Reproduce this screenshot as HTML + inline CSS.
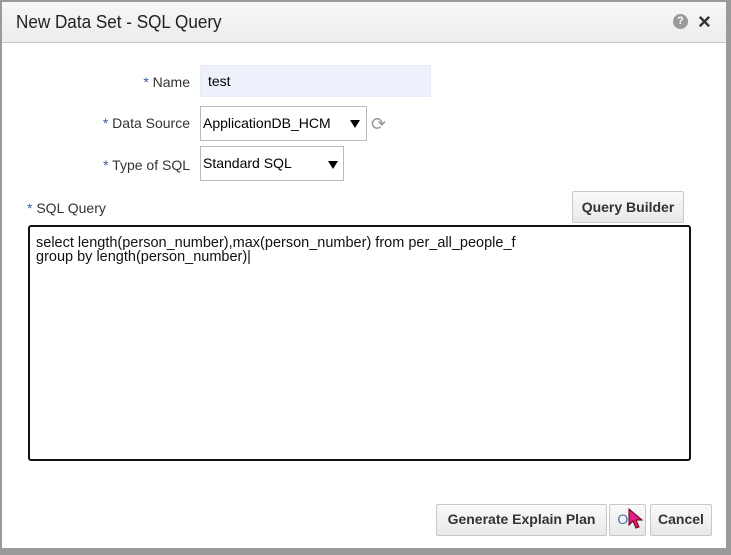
<!DOCTYPE html>
<html><head><style>
body{margin:0;width:731px;height:555px;background:#9a9a9a;position:relative;overflow:hidden;font-family:"Liberation Sans",Arial,sans-serif;}
.dlg{position:absolute;left:1px;top:1px;width:724px;height:546px;background:#fff;border:1px solid #9a9a9a;}
.title{position:absolute;left:0;top:0;right:0;height:40px;background:linear-gradient(#f7f7f7,#ececec);border-bottom:1px solid #c8c8c8;}
.title span{position:absolute;left:14px;top:10px;font-size:18px;color:#222;transform:scaleX(.95);transform-origin:left;}
.lbl{position:absolute;font-size:14px;color:#333;text-align:right;}
.lbl b{color:#3a5a9a;font-weight:normal;}
.box{position:absolute;border:1px solid #bbb;background:#fff;font-size:14px;color:#000;box-sizing:border-box;padding:0 2px;}
.btn{position:absolute;border:1px solid #c8c8c8;border-radius:2px;background:linear-gradient(#fafafa,#e8e8e8);font-size:14px;font-weight:bold;color:#333;box-sizing:border-box;text-align:center;line-height:29px;}
.tri{position:absolute;width:0;height:0;border-left:5px solid transparent;border-right:5px solid transparent;border-top:8px solid #000;}
</style></head><body>
<div class="dlg">
<div class="title"><span>New Data Set - SQL Query</span>
<div style="position:absolute;left:671px;top:12px;width:15px;height:15px;border-radius:50%;background:#999;color:#fff;font-size:11px;font-weight:bold;text-align:center;line-height:15px">?</div>
<div style="position:absolute;left:696px;top:7px;font-size:22px;font-weight:bold;color:#333">×</div>
</div>
<div class="lbl" style="left:88px;width:100px;top:72px"><b>*</b> Name</div>
<div class="box" style="left:198px;top:63px;width:231px;height:32px;background:#eef0fb;border-color:#e8ebf8;line-height:30px;padding-left:7px">test</div>
<div class="lbl" style="left:38px;width:150px;top:113px"><b>*</b> Data Source</div>
<div class="box" style="left:198px;top:104px;width:167px;height:35px;line-height:33px">ApplicationDB_HCM</div>
<div class="tri" style="left:348px;top:118px"></div>
<div style="position:absolute;left:369px;top:112px;font-size:18px;color:#999">⟳</div>
<div class="lbl" style="left:38px;width:150px;top:155px"><b>*</b> Type of SQL</div>
<div class="box" style="left:198px;top:144px;width:144px;height:35px;line-height:33px">Standard SQL</div>
<div class="tri" style="left:326px;top:159px"></div>
<div class="lbl" style="left:25px;top:198px"><b>*</b> SQL Query</div>
<div class="btn" style="left:570px;top:189px;width:112px;height:32px;line-height:30px">Query Builder</div>
<div style="position:absolute;left:26px;top:223px;width:663px;height:236px;border:2px solid #111;border-radius:3px;box-sizing:border-box;font-size:14.5px;line-height:14px;padding:9px 6px;color:#111">select length(person_number),max(person_number) from per_all_people_f<br>group by length(person_number)|</div>
<div class="btn" style="left:434px;top:502px;width:171px;height:32px">Generate Explain Plan</div>
<div class="btn" style="left:607px;top:502px;width:37px;height:32px;color:#4a6fb0;font-weight:normal">OK</div>
<div class="btn" style="left:648px;top:502px;width:62px;height:32px">Cancel</div>
<svg style="position:absolute;left:626px;top:506px" width="18" height="22"><path d="M1 1 L1 17 L5 13 L8 20 L11 19 L8 12 L14 12 Z" fill="#e0208a" stroke="#600" stroke-width="1"/></svg>
</div>
</body></html>
